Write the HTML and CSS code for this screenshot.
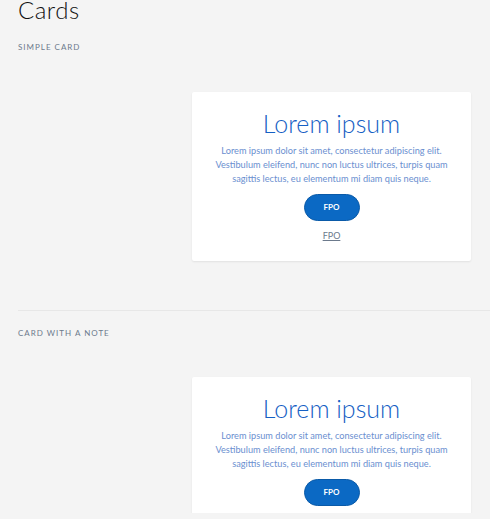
FILE: index.html
```html
<!DOCTYPE html>
<html lang="en">
<head>
<meta charset="utf-8">
<title>Cards</title>
<link rel="stylesheet" href="styles.css">
</head>
<body>
<main class="page">
  <h1 class="page-title">Cards</h1>

  <section class="section">
    <h2 class="section-label">Simple card</h2>
    <div class="card-row">
      <article class="card">
        <h3 class="card-title">Lorem ipsum</h3>
        <p class="card-text">Lorem ipsum dolor sit amet, consectetur adipiscing elit. Vestibulum eleifend, nunc non luctus ultrices, turpis quam sagittis lectus, eu elementum mi diam quis neque.</p>
        <a class="btn" href="#">FPO</a>
        <a class="text-link" href="#">FPO</a>
      </article>
    </div>
  </section>

  <section class="section section-divided">
    <h2 class="section-label">Card with a note</h2>
    <div class="card-row">
      <article class="card">
        <h3 class="card-title">Lorem ipsum</h3>
        <p class="card-text">Lorem ipsum dolor sit amet, consectetur adipiscing elit. Vestibulum eleifend, nunc non luctus ultrices, turpis quam sagittis lectus, eu elementum mi diam quis neque.</p>
        <a class="btn" href="#">FPO</a>
      </article>
    </div>
  </section>
</main>
</body>
</html>
```

FILE: styles.css
```css
html, body {
  margin: 0;
  padding: 0;
  background: #f4f4f4;
}

body {
  font-family: "Lato", "Liberation Sans", sans-serif;
}

.page {
  height: 513px;
  overflow: hidden;
  padding-left: 18px;
  box-sizing: border-box;
}

.page-title {
  margin: 0;
  font-size: 24px;
  line-height: 20px;
  font-weight: 300;
  color: #111;
  letter-spacing: 0.5px;
}

.section-label {
  margin: 0;
  font-size: 8px;
  line-height: 10px;
  font-weight: 400;
  letter-spacing: 1px;
  text-transform: uppercase;
  color: #6c7a8c;
}

.section {
  padding-top: 22px;
  padding-bottom: 49px;
}

.section-divided {
  border-top: 1px solid #e7e7e7;
  padding-top: 17px;
}

.card-row {
  display: flex;
  justify-content: flex-end;
  padding-right: 19px;
  padding-top: 40px;
}

.section-divided .card-row {
  padding-top: 39px;
}

.card {
  width: 279px;
  box-sizing: border-box;
  background: #fff;
  border-radius: 2px;
  box-shadow: 0 1px 2px rgba(0, 0, 0, 0.08);
  padding: 16px 18px 19px;
  display: flex;
  flex-direction: column;
  align-items: center;
  text-align: center;
}

.card-title {
  margin: 0;
  font-size: 25px;
  line-height: 30px;
  font-weight: 300;
  color: #1560c4;
}

.card-text {
  margin: 6px 0 0;
  font-size: 9.2px;
  line-height: 14px;
  color: #6b8fd0;
}

.btn {
  margin-top: 8px;
  width: 56px;
  height: 27px;
  box-sizing: border-box;
  border-radius: 14px;
  background: #0b69c4;
  border: 1px solid #0a5aa8;
  color: #fff;
  font-size: 8px;
  font-weight: 700;
  line-height: 25px;
  text-decoration: none;
}

.text-link {
  margin-top: 9px;
  font-size: 9px;
  line-height: 12px;
  color: #6c7a8c;
  text-decoration: underline;
}
```
